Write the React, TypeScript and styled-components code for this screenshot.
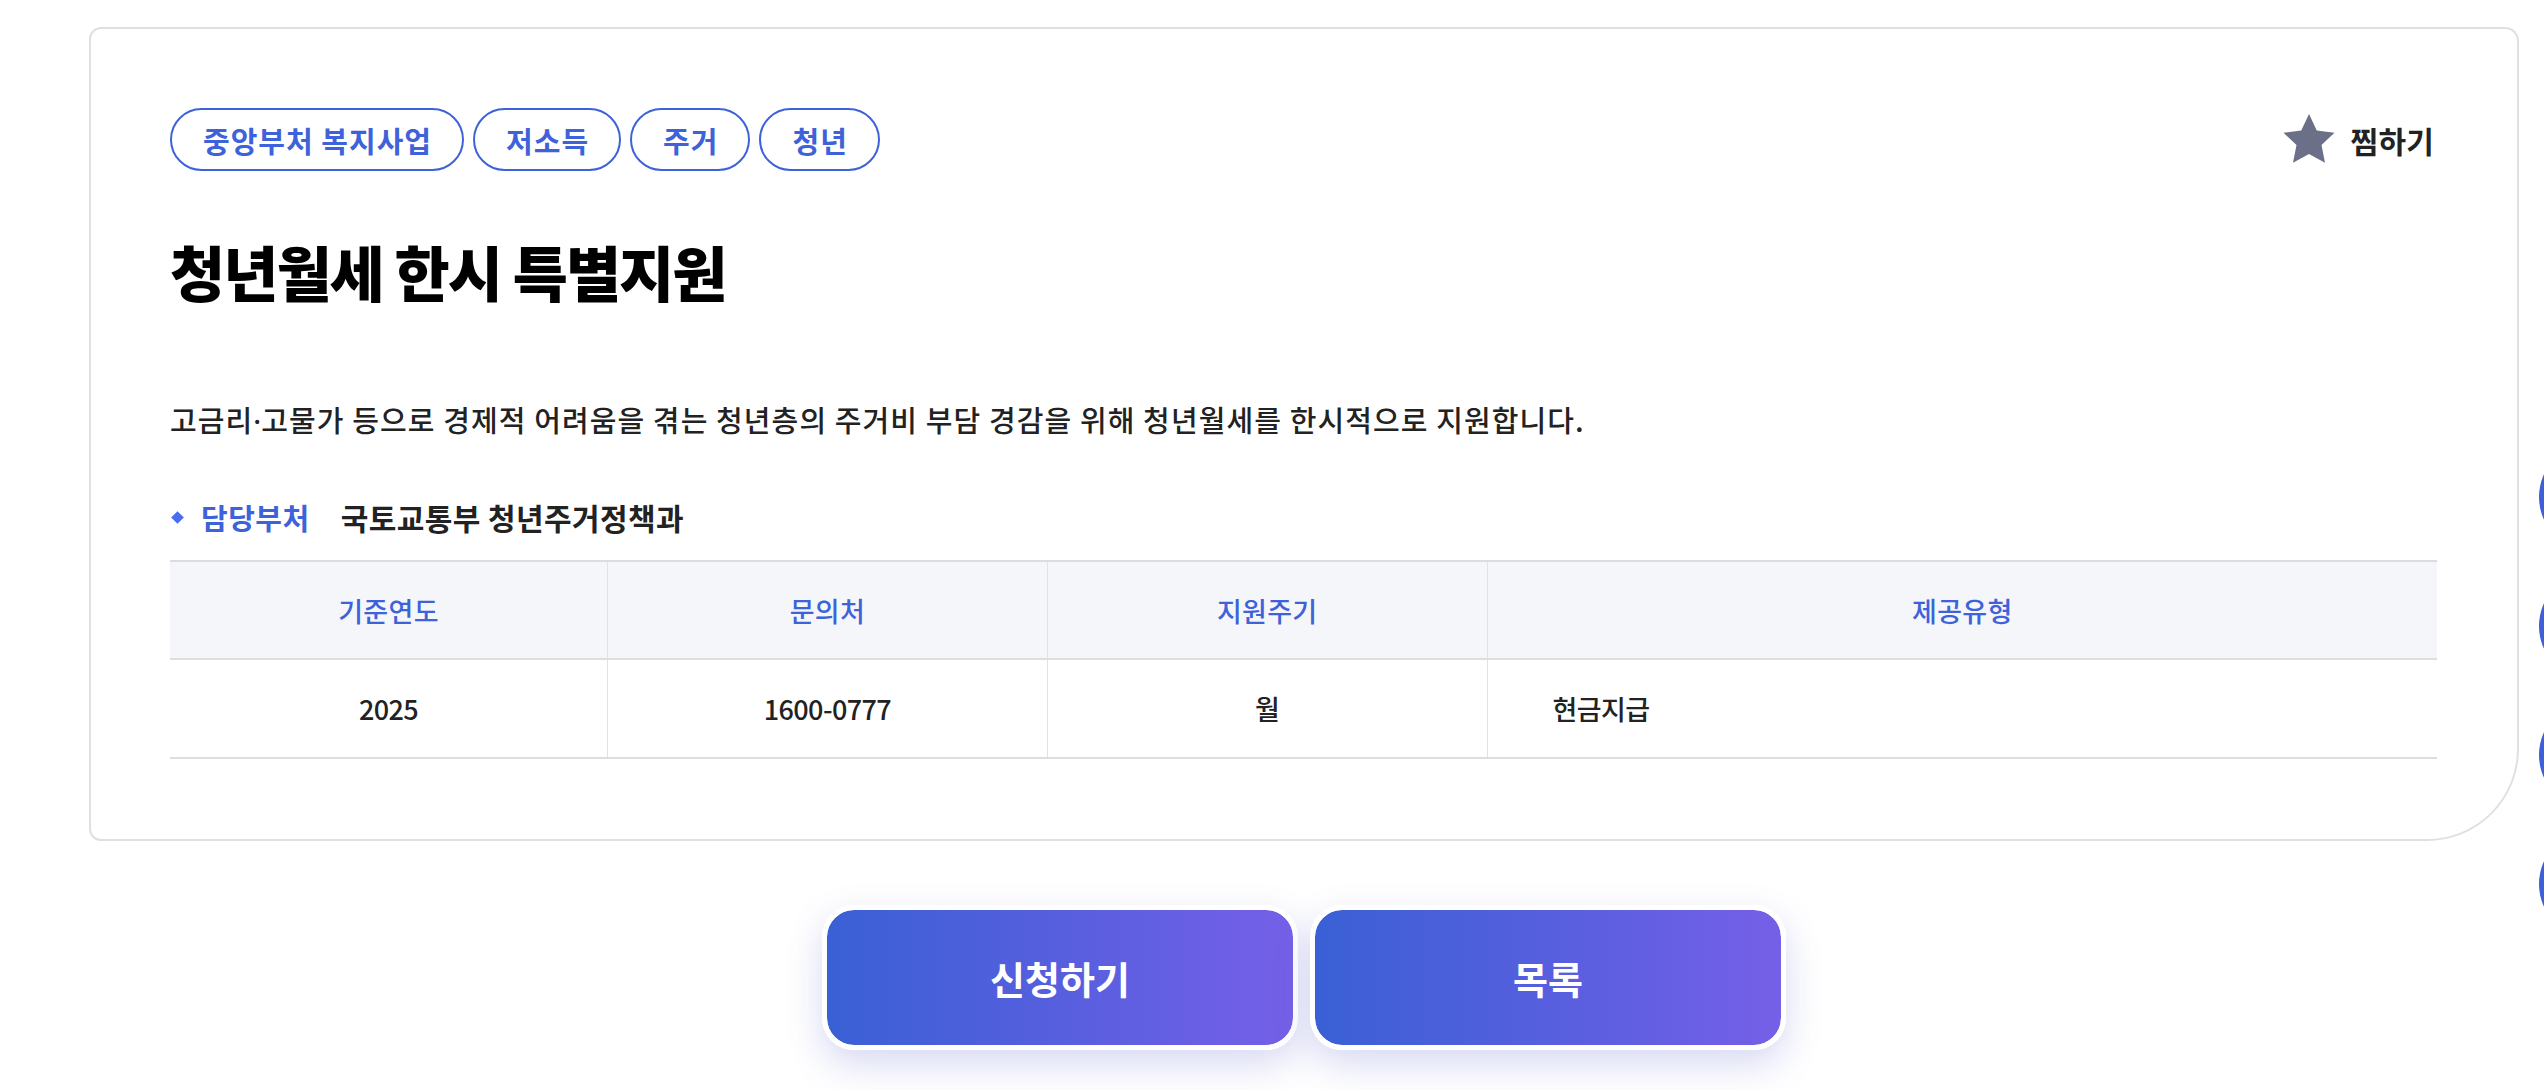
import React from 'react';
import styled, { createGlobalStyle } from 'styled-components';

const GlobalStyle = createGlobalStyle`
  html, body {
    margin: 0;
    padding: 0;
    background: #fff;
  }
  body {
    font-family: "Noto Sans CJK KR", "Noto Sans", sans-serif;
    color: #222;
  }
`;

const Page = styled.div`
  padding: 27px 25px 40px 89px;
`;

const Card = styled.section`
  box-sizing: border-box;
  border: 2px solid #e0e0e0;
  border-radius: 12px 14px 92px 12px;
  padding: 79px 80px 80px 79px;
  background: #fff;
`;

const TopRow = styled.div`
  display: flex;
  align-items: center;
  justify-content: space-between;
`;

const Chips = styled.div`
  display: flex;
  gap: 9px;
`;

const Chip = styled.span`
  box-sizing: border-box;
  height: 63px;
  display: inline-flex;
  align-items: center;
  padding: 0 30px 0 31px;
  border: 2px solid #3d62d9;
  border-radius: 32px;
  color: #3d62d9;
  font-size: 29px;
  font-weight: 600;
  letter-spacing: 1px;
`;

const FavButton = styled.button`
  display: flex;
  align-items: center;
  gap: 12px;
  margin-right: 3px;
  border: none;
  background: none;
  padding: 0;
  font-family: inherit;
  font-size: 30px;
  font-weight: 700;
  letter-spacing: 0.2px;
  color: #222;
  cursor: pointer;

  svg {
    width: 60px;
    height: 60px;
    filter: blur(0.6px);
  }
`;

const Title = styled.h1`
  margin: 61px 0 0;
  font-size: 60px;
  line-height: 78px;
  font-weight: 900;
  letter-spacing: -2px;
  color: #000;
`;

const Description = styled.p`
  margin: 88px 0 0;
  font-size: 29px;
  line-height: 42px;
  font-weight: 500;
  letter-spacing: 1.1px;
  color: #222;
`;

const Dot = styled.span`
  font-family: "Noto Sans", "DejaVu Sans", sans-serif;
  letter-spacing: 0;
`;

const DeptRow = styled.div`
  margin-top: 54px;
  height: 42px;
  display: flex;
  align-items: center;
  font-size: 29px;
`;

const Diamond = styled.i`
  width: 9px;
  height: 9px;
  background: #4a6cf0;
  transform: rotate(45deg);
  margin: 0 19px 0 3px;
`;

const DeptLabel = styled.span`
  color: #3d62d9;
  font-weight: 700;
  letter-spacing: 0.5px;
  margin-right: 31px;
`;

const DeptValue = styled.span`
  color: #222;
  font-size: 30px;
  font-weight: 600;
  letter-spacing: 0.4px;
`;

const Table = styled.table`
  margin-top: 22px;
  width: 100%;
  border-collapse: collapse;
  table-layout: fixed;
  border-top: 2px solid #dcdcdc;
  border-bottom: 2px solid #dedede;
`;

const HeadCell = styled.th`
  height: 96px;
  background: #f5f6fa;
  border-bottom: 2px solid #dedede;
  border-left: 1px solid #e2e2e2;
  color: #3d62d9;
  font-size: 27px;
  font-weight: 500;
  letter-spacing: 0.3px;
  text-align: center;
  padding: 0;

  &:first-child {
    border-left: none;
  }
`;

const BodyCell = styled.td<{ $align?: 'left' | 'center' }>`
  height: 97px;
  border-left: 1px solid #e2e2e2;
  font-size: 27px;
  font-weight: 500;
  letter-spacing: -0.6px;
  color: #222;
  text-align: ${(p) => p.$align ?? 'center'};
  padding: ${(p) => (p.$align === 'left' ? '0 0 0 65px' : '0')};

  &:first-child {
    border-left: none;
  }
`;

const Actions = styled.div`
  display: flex;
  justify-content: center;
  gap: 12px;
  margin-top: 64px;
`;

const ActionButton = styled.button`
  box-sizing: border-box;
  width: 476px;
  height: 145px;
  border: 5px solid #fff;
  border-radius: 32px;
  background: linear-gradient(90deg, #3a60d5 0%, #5a5fdf 55%, #7560e8 100%);
  background-clip: padding-box;
  box-shadow: 0 14px 36px rgba(88, 96, 200, 0.24);
  color: #fff;
  font-family: inherit;
  font-size: 38px;
  font-weight: 700;
  letter-spacing: 0;
  cursor: pointer;
`;

const QuickMenu = styled.nav`
  position: fixed;
  left: 2539px;
  top: 442px;
  display: flex;
  flex-direction: column;
  gap: 19px;
`;

const QuickDot = styled.span`
  display: block;
  width: 110px;
  height: 110px;
  border-radius: 50%;
  background: #3d5fd8;
`;

const tags = ['중앙부처 복지사업', '저소득', '주거', '청년'];

const StarIcon = () => (
  <svg viewBox="0 0 24 24" aria-hidden="true">
    <path
      d="M12 1.6l3.1 6.6 7.1.9-5.2 4.9 1.4 7.1L12 17.6l-6.4 3.5 1.4-7.1-5.2-4.9 7.1-.9L12 1.6z"
      fill="#6b6f88"
    />
  </svg>
);

export default function App() {
  return (
    <>
      <GlobalStyle />
      <Page>
        <Card>
          <TopRow>
            <Chips>
              {tags.map((tag) => (
                <Chip key={tag}>{tag}</Chip>
              ))}
            </Chips>
            <FavButton type="button">
              <StarIcon />
              찜하기
            </FavButton>
          </TopRow>
          <Title>청년월세 한시 특별지원</Title>
          <Description>
            고금리<Dot>·</Dot>고물가 등으로 경제적 어려움을 겪는 청년층의 주거비 부담 경감을 위해 청년월세를 한시적으로 지원합니다.
          </Description>
          <DeptRow>
            <Diamond />
            <DeptLabel>담당부처</DeptLabel>
            <DeptValue>국토교통부 청년주거정책과</DeptValue>
          </DeptRow>
          <Table>
            <colgroup>
              <col style={{ width: '19.3%' }} />
              <col style={{ width: '19.4%' }} />
              <col style={{ width: '19.4%' }} />
              <col />
            </colgroup>
            <thead>
              <tr>
                <HeadCell>기준연도</HeadCell>
                <HeadCell>문의처</HeadCell>
                <HeadCell>지원주기</HeadCell>
                <HeadCell>제공유형</HeadCell>
              </tr>
            </thead>
            <tbody>
              <tr>
                <BodyCell>2025</BodyCell>
                <BodyCell>1600-0777</BodyCell>
                <BodyCell>월</BodyCell>
                <BodyCell $align="left">현금지급</BodyCell>
              </tr>
            </tbody>
          </Table>
        </Card>
        <Actions>
          <ActionButton type="button">신청하기</ActionButton>
          <ActionButton type="button">목록</ActionButton>
        </Actions>
      </Page>
      <QuickMenu>
        <QuickDot />
        <QuickDot />
        <QuickDot />
        <QuickDot />
      </QuickMenu>
    </>
  );
}
